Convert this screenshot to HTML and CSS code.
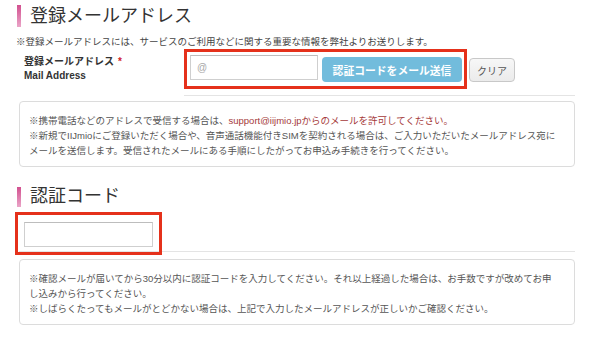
FILE: index.html
```html
<!DOCTYPE html>
<html lang="ja">
<head>
<meta charset="utf-8">
<title>登録メールアドレス</title>
<link rel="stylesheet" href="styles.css">
</head>
<body>
<div class="page">
  <h2 class="heading heading-first"><span class="bar"></span>登録メールアドレス</h2>
  <p class="lead">※登録メールアドレスには、サービスのご利用などに関する重要な情報を弊社よりお送りします。</p>
  <div class="form-row">
    <div class="label">
      <div>登録メールアドレス<span class="req">*</span></div>
      <div>Mail Address</div>
    </div>
    <div class="field">
      <div class="mark mark-mail">
        <input class="text-input mail-input" type="text" placeholder="@">
        <button class="send" type="button">認証コードをメール送信</button>
      </div>
      <button class="clear" type="button">クリア</button>
    </div>
  </div>
  <div class="note note-first">
    ※携帯電話などのアドレスで受信する場合は、<span class="warn">support@iijmio.jpからのメールを許可してください。</span><br>
    ※新規でIIJmioにご登録いただく場合や、音声通話機能付きSIMを契約される場合は、ご入力いただいたメールアドレス宛に<br>
    メールを送信します。受信されたメールにある手順にしたがってお申込み手続きを行ってください。
  </div>

  <h2 class="heading heading-second"><span class="bar"></span>認証コード</h2>
  <div class="code-row">
    <div class="mark mark-code">
      <input class="text-input code-input" type="text">
    </div>
  </div>
  <div class="note note-second">
    ※確認メールが届いてから30分以内に認証コードを入力してください。それ以上経過した場合は、お手数ですが改めてお申<br>
    し込みから行ってください。<br>
    ※しばらくたってもメールがとどかない場合は、上記で入力したメールアドレスが正しいかご確認ください。
  </div>
</div>
</body>
</html>
```

FILE: styles.css
```css
* {
  box-sizing: border-box;
}

html, body {
  margin: 0;
  padding: 0;
  background: #ffffff;
}

body {
  font-family: "Liberation Sans", "Noto Sans CJK JP", sans-serif;
  color: #444;
}

.page {
  width: 575px;
  padding-left: 15px;
}

.heading {
  display: flex;
  align-items: center;
  margin: 0;
  font-size: 18px;
  font-weight: normal;
  line-height: 22px;
  color: #333;
}

.heading .bar {
  display: block;
  width: 4px;
  height: 22px;
  margin-left: 2px;
  margin-right: 9px;
  background: linear-gradient(#d2508f, #eaa5c8);
}

.heading-first {
  margin-top: 5px;
}

.heading-second {
  margin-top: 19px;
  line-height: 21px;
}

.heading-second .bar {
  height: 20px;
}

.lead {
  margin: 9px 0 0 1px;
  font-size: 9.5px;
  line-height: 12px;
  color: #444;
  white-space: nowrap;
}

.form-row {
  display: flex;
  margin-left: 9px;
  margin-top: 1px;
}

.label {
  width: 160px;
  padding-top: 6px;
  font-size: 10px;
  font-weight: bold;
  line-height: 14px;
  color: #333;
}

.req {
  color: #d0202a;
  margin-left: 4px;
}

.field {
  flex: 1;
  display: flex;
  align-items: flex-start;
  padding-bottom: 6px;
  border-bottom: 1px solid #e4e4e4;
}

.mark {
  border: 3px solid #e5311b;
}

.mark-mail {
  display: flex;
  align-items: flex-start;
  padding: 3px 2px 4px 3px;
}

.text-input {
  display: block;
  margin: 0;
  height: 25px;
  padding: 0 6px;
  border: 1px solid #cfcfcf;
  border-top-color: #bdbdbd;
  background: #fff;
  font-family: "Liberation Sans", "Noto Sans CJK JP", sans-serif;
  font-size: 10px;
  color: #333;
  outline: none;
}

.text-input::placeholder {
  color: #a8a8a8;
}

.mail-input {
  width: 128px;
}

.send {
  margin: 2px 0 0 4px;
  width: 140px;
  height: 25px;
  padding: 0;
  border: none;
  border-radius: 4px;
  background: #72bcdc;
  color: #ffffff;
  font-family: "Liberation Sans", "Noto Sans CJK JP", sans-serif;
  font-size: 10.8px;
  font-weight: bold;
}

.clear {
  margin: 9px 0 0 2px;
  width: 46px;
  height: 24px;
  padding: 0;
  border: 1px solid #c8c8c8;
  border-radius: 4px;
  background: linear-gradient(#f7f7f7, #ebebeb);
  color: #555;
  font-family: "Liberation Sans", "Noto Sans CJK JP", sans-serif;
  font-size: 10px;
}

.note {
  margin-left: 4px;
  width: 556px;
  border: 1px solid #dcdcdc;
  border-radius: 4px;
  padding: 11px 9px 8px 9px;
  font-size: 9.5px;
  line-height: 15px;
  color: #555;
  white-space: nowrap;
}

.note-first {
  margin-top: 5px;
}

.warn {
  color: #a53a3a;
}

.code-row {
  margin-top: 5px;
  margin-left: 4px;
  width: 556px;
  height: 40px;
  border-bottom: 1px solid #e4e4e4;
}

.mark-code {
  width: 147px;
  margin-left: -4px;
  padding: 7px 6px 5px 6px;
}

.code-input {
  width: 129px;
}

.note-second {
  margin-top: 7px;
}
```
